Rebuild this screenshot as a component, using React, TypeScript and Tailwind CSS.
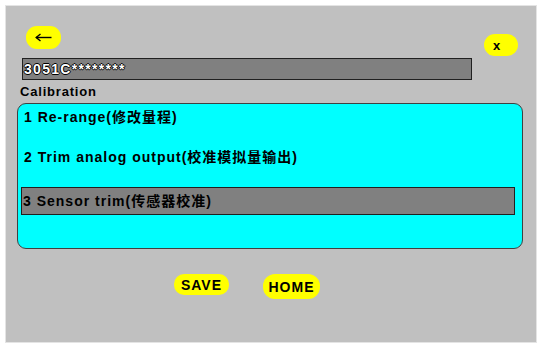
import React from "react";

const font = { fontFamily: '"Liberation Sans", "Noto Sans CJK SC", sans-serif' };

export default function App() {
  return (
    <div className="w-[544px] h-[351px] bg-white pt-[5px] pl-[5px]" style={font}>
      <div className="w-[532px] h-[338px] bg-[#c0c0c0] border border-[#e4e4e4] flex flex-col">
        {/* top buttons */}
        <div className="flex justify-between items-start mt-[20px]">
          <button className="ml-[20px] w-[35px] h-[23px] rounded-[11px] bg-[#ffff00] flex items-center justify-center">
            <svg width="17" height="9" viewBox="0 0 17 9">
              <path d="M1 4.5 H16.5" stroke="black" strokeWidth="1.4" />
              <path d="M5.5 1 L1.2 4.5 L5.5 8" stroke="black" strokeWidth="1.4" fill="none" />
            </svg>
          </button>
          <button className="mt-[8px] mr-[18px] w-[34px] h-[22px] rounded-[11px] bg-[#ffff00] flex items-center pl-[9px] text-[13px] font-bold text-black leading-none">
            x
          </button>
        </div>
        {/* device box */}
        <div className="mt-[2px] ml-[16px] w-[450px] h-[22px] bg-[#808080] border border-[#202020] flex items-center pl-[1px] text-[14px] font-bold text-white leading-none tracking-[1.3px] [text-shadow:1px_0_0_#000,-1px_0_0_#000,0_1px_0_#000,0_-1px_0_#000]">
          3051C********
        </div>
        <div className="mt-[3px] ml-[14px] h-[18px] leading-[18px] text-[13px] font-bold text-black tracking-[0.8px]">
          Calibration
        </div>
        {/* menu */}
        <div className="mt-[2px] ml-[11px] w-[506px] h-[146px] bg-[#00ffff] border border-[#404040] rounded-[9px] pl-[3px] pr-[7px] flex flex-col text-[14px] font-bold text-black tracking-[1px]">
          <div className="h-[26px] flex items-center pl-[3px]">1 Re-range(修改量程)</div>
          <div className="mt-[14px] h-[26px] flex items-center pl-[3px]">2 Trim analog output(校准模拟量输出)</div>
          <div className="mt-[17px] h-[28px] bg-[#808080] border border-[#202020] flex items-center pl-[1px]">
            3 Sensor trim(传感器校准)
          </div>
        </div>
        {/* bottom buttons */}
        <div className="mt-[25px] ml-[168px] flex items-start gap-[34px]">
          <button className="w-[55px] h-[21px] rounded-[10px] bg-[#ffff00] flex items-center justify-center text-[14px] font-bold text-black tracking-[1px] leading-none">
            SAVE
          </button>
          <button className="w-[57px] h-[25px] rounded-[12px] bg-[#ffff00] flex items-center justify-center text-[14px] font-bold text-black tracking-[1px] leading-none">
            HOME
          </button>
        </div>
      </div>
    </div>
  );
}
